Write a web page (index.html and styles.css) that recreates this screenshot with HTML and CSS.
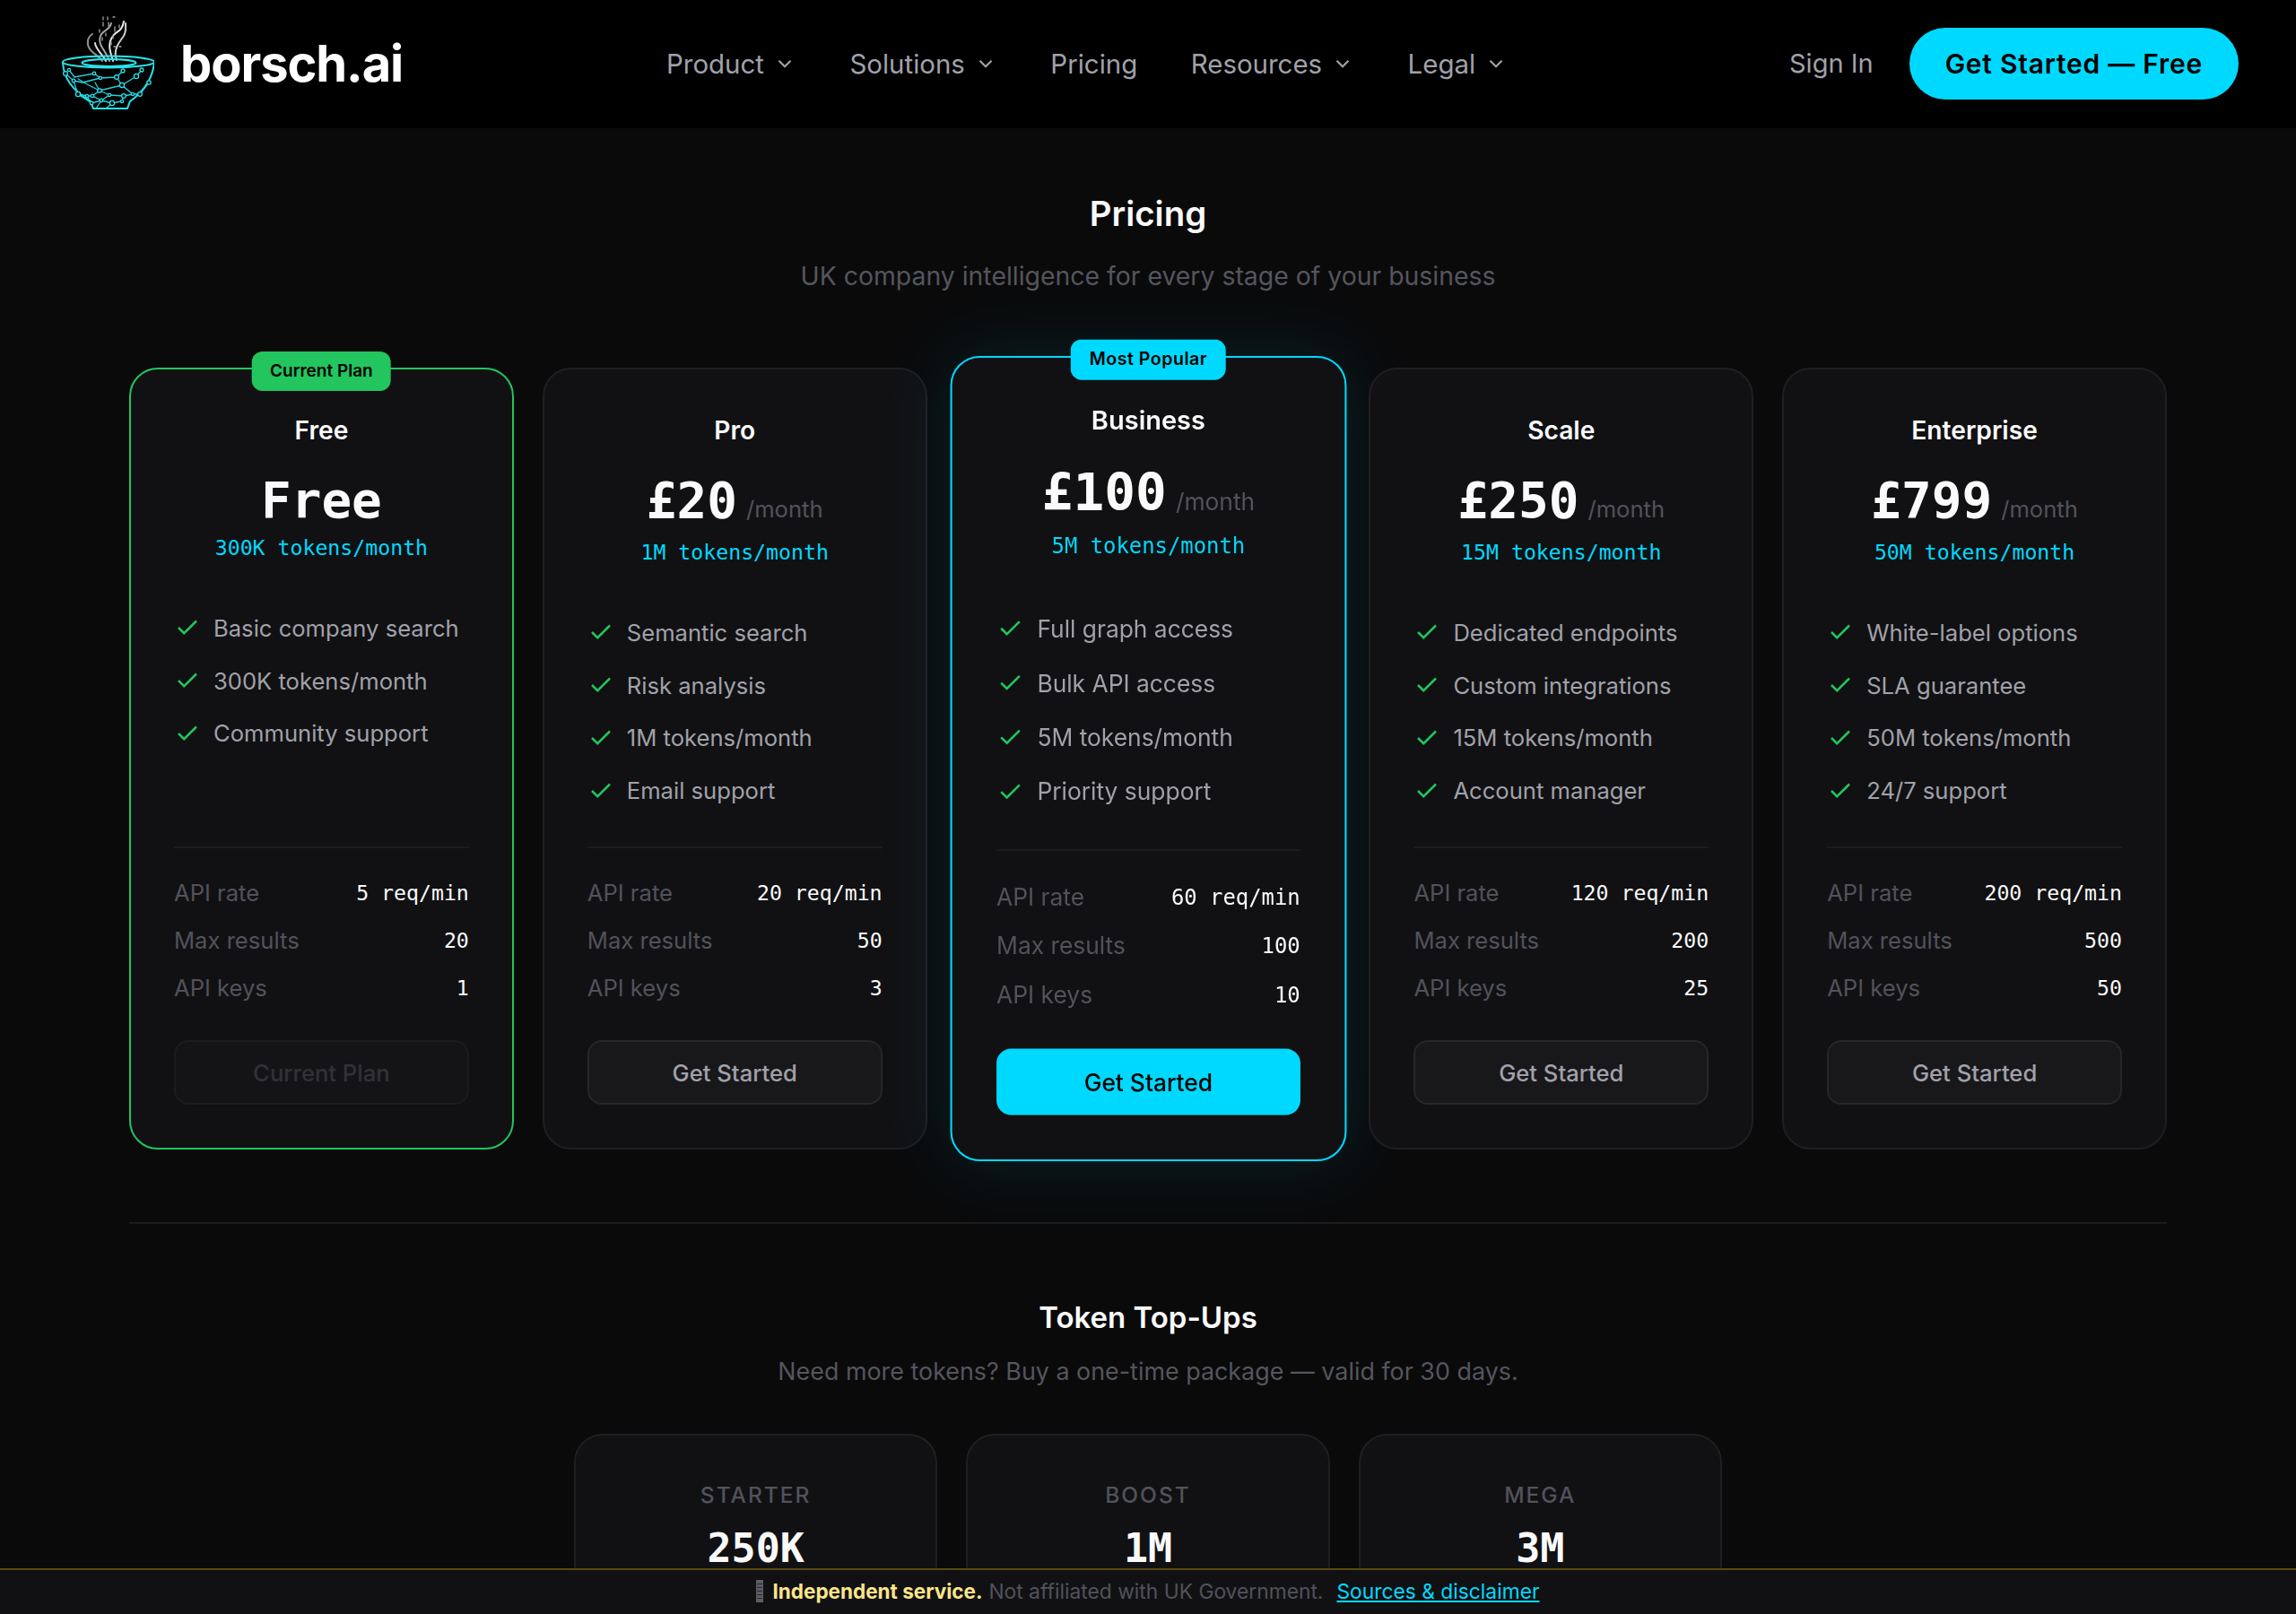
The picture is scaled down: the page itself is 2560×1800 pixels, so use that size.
FILE: index.html
```html
<!DOCTYPE html>
<html lang="en">
<head>
<meta charset="utf-8">
<title>Pricing - borsch.ai</title>
<link rel="stylesheet" href="styles.css">
</head>
<body>
<header class="site-header">
  <a class="brand" href="#">
    <svg class="brand-logo" viewBox="0 0 104 106" aria-hidden="true">
      <g fill="none" stroke-linecap="round">
        <g stroke-width="2">
          <path d="M46 50C40 42 28 38 30 28c0-4 2-6 5-8" stroke="#8f8f8f"/>
          <path d="M54 50C50 38 40 32 44 22c2-6 10-6 12-14" stroke="#a8a8a8"/>
          <path d="M58 50C54 38 52 30 58 22c4-6 10-4 12-16" stroke="#e8e8e8"/>
          <path d="M62 49C58 38 64 30 70 22c3-5 2-10 2-14" stroke="#d0d0d0"/>
          <path d="M50 50C46 42 38 36 38 30" stroke="#e0e0e0"/>
        </g>
        <g stroke="#a0a0a0" stroke-width="1.300">
          <path d="M47 1v3M52 1v3M58 1h2M47 7v4M53 7v4M43 15v3M60 12v5M65 10v3M50 19v3M56 29v3M59 34h2M46 24v3M58 22v3M65 34h2"/>
        </g>
        <g stroke="#2ae4ec" stroke-width="2">
          <ellipse cx="53" cy="51" rx="51" ry="6.500"/>
          <ellipse cx="53.500" cy="52" rx="30" ry="4"/>
          <path d="M2 52c1 18 12 32 31 43l3 8h38l3-8c15-11 25-25 27-43"/>
        </g>
        <g stroke="#22d3dc" stroke-width="1.300">
          <path d="M5 64l9 8 5 15 15 10M9 60l6 8 22-4 7 5 18-1 7-7M14 72l10 2 20-5"/>
          <path d="M62 68l6 9 12 10 8 0 10-13M68 77l16-10 6-7M43 83l25-6M35 89l8-6-5-9"/>
          <path d="M19 87l10 2 6 0 10 5 9-6 16 1 10-2M34 97l11-3 12 3 11-2 2-6M29 89l5 8"/>
          <path d="M54 88l-11-5M19 70l10 6 14 7M57 97l-7 6M45 94l-6 9"/>
        </g>
        <g fill="#000" stroke="#2ae4ec" stroke-width="1.300">
          <circle cx="5" cy="64" r="2.400"/><circle cx="9" cy="60" r="1.600"/><circle cx="14" cy="72" r="1.800"/>
          <circle cx="19" cy="87" r="2.600"/><circle cx="29" cy="89" r="1.600"/><circle cx="37" cy="64" r="1.800"/>
          <circle cx="44" cy="69" r="1.600"/><circle cx="62" cy="68" r="2.400"/><circle cx="69" cy="61" r="2"/>
          <circle cx="84" cy="67" r="2.600"/><circle cx="90" cy="60" r="2"/><circle cx="98" cy="74" r="2.200"/>
          <circle cx="68" cy="77" r="2.600"/><circle cx="43" cy="83" r="2.200"/><circle cx="35" cy="89" r="1.800"/>
          <circle cx="45" cy="94" r="1.800"/><circle cx="54" cy="88" r="1.600"/><circle cx="70" cy="89" r="2.400"/>
          <circle cx="88" cy="87" r="2.400"/><circle cx="57" cy="97" r="2.600"/><circle cx="68" cy="95" r="1.600"/>
          <circle cx="80" cy="87" r="1.600"/><circle cx="34" cy="97" r="1.800"/>
        </g>
      </g>
    </svg>
    <span class="brand-name">borsch.ai</span>
  </a>
  <nav class="main-nav">
    <a href="#">Product<svg class="chev" viewBox="0 0 24 24"><path d="m6 9 6 6 6-6"/></svg></a>
    <a href="#">Solutions<svg class="chev" viewBox="0 0 24 24"><path d="m6 9 6 6 6-6"/></svg></a>
    <a href="#">Pricing</a>
    <a href="#">Resources<svg class="chev" viewBox="0 0 24 24"><path d="m6 9 6 6 6-6"/></svg></a>
    <a href="#">Legal<svg class="chev" viewBox="0 0 24 24"><path d="m6 9 6 6 6-6"/></svg></a>
  </nav>
  <div class="header-actions">
    <a class="sign-in" href="#">Sign In</a>
    <a class="cta" href="#">Get Started — Free</a>
  </div>
</header>

<main class="page">
  <section class="intro">
    <h1>Pricing</h1>
    <p>UK company intelligence for every stage of your business</p>
  </section>

  <section class="plans">
    <article class="plan plan-current">
      <span class="badge badge-green">Current Plan</span>
      <h2>Free</h2>
      <div class="price"><strong>Free</strong></div>
      <div class="tokens">300K tokens/month</div>
      <ul class="features">
        <li><svg class="check" viewBox="0 0 24 24"><path d="M20 6 9 17l-5-5"/></svg>Basic company search</li>
        <li><svg class="check" viewBox="0 0 24 24"><path d="M20 6 9 17l-5-5"/></svg>300K tokens/month</li>
        <li><svg class="check" viewBox="0 0 24 24"><path d="M20 6 9 17l-5-5"/></svg>Community support</li>
      </ul>
      <dl class="stats">
        <div><dt>API rate</dt><dd>5 req/min</dd></div>
        <div><dt>Max results</dt><dd>20</dd></div>
        <div><dt>API keys</dt><dd>1</dd></div>
      </dl>
      <a class="btn btn-disabled">Current Plan</a>
    </article>

    <article class="plan">
      <h2>Pro</h2>
      <div class="price"><strong>£20</strong><span>/month</span></div>
      <div class="tokens">1M tokens/month</div>
      <ul class="features">
        <li><svg class="check" viewBox="0 0 24 24"><path d="M20 6 9 17l-5-5"/></svg>Semantic search</li>
        <li><svg class="check" viewBox="0 0 24 24"><path d="M20 6 9 17l-5-5"/></svg>Risk analysis</li>
        <li><svg class="check" viewBox="0 0 24 24"><path d="M20 6 9 17l-5-5"/></svg>1M tokens/month</li>
        <li><svg class="check" viewBox="0 0 24 24"><path d="M20 6 9 17l-5-5"/></svg>Email support</li>
      </ul>
      <dl class="stats">
        <div><dt>API rate</dt><dd>20 req/min</dd></div>
        <div><dt>Max results</dt><dd>50</dd></div>
        <div><dt>API keys</dt><dd>3</dd></div>
      </dl>
      <a class="btn" href="#">Get Started</a>
    </article>

    <article class="plan plan-popular">
      <span class="badge badge-cyan">Most Popular</span>
      <h2>Business</h2>
      <div class="price"><strong>£100</strong><span>/month</span></div>
      <div class="tokens">5M tokens/month</div>
      <ul class="features">
        <li><svg class="check" viewBox="0 0 24 24"><path d="M20 6 9 17l-5-5"/></svg>Full graph access</li>
        <li><svg class="check" viewBox="0 0 24 24"><path d="M20 6 9 17l-5-5"/></svg>Bulk API access</li>
        <li><svg class="check" viewBox="0 0 24 24"><path d="M20 6 9 17l-5-5"/></svg>5M tokens/month</li>
        <li><svg class="check" viewBox="0 0 24 24"><path d="M20 6 9 17l-5-5"/></svg>Priority support</li>
      </ul>
      <dl class="stats">
        <div><dt>API rate</dt><dd>60 req/min</dd></div>
        <div><dt>Max results</dt><dd>100</dd></div>
        <div><dt>API keys</dt><dd>10</dd></div>
      </dl>
      <a class="btn btn-primary" href="#">Get Started</a>
    </article>

    <article class="plan">
      <h2>Scale</h2>
      <div class="price"><strong>£250</strong><span>/month</span></div>
      <div class="tokens">15M tokens/month</div>
      <ul class="features">
        <li><svg class="check" viewBox="0 0 24 24"><path d="M20 6 9 17l-5-5"/></svg>Dedicated endpoints</li>
        <li><svg class="check" viewBox="0 0 24 24"><path d="M20 6 9 17l-5-5"/></svg>Custom integrations</li>
        <li><svg class="check" viewBox="0 0 24 24"><path d="M20 6 9 17l-5-5"/></svg>15M tokens/month</li>
        <li><svg class="check" viewBox="0 0 24 24"><path d="M20 6 9 17l-5-5"/></svg>Account manager</li>
      </ul>
      <dl class="stats">
        <div><dt>API rate</dt><dd>120 req/min</dd></div>
        <div><dt>Max results</dt><dd>200</dd></div>
        <div><dt>API keys</dt><dd>25</dd></div>
      </dl>
      <a class="btn" href="#">Get Started</a>
    </article>

    <article class="plan">
      <h2>Enterprise</h2>
      <div class="price"><strong>£799</strong><span>/month</span></div>
      <div class="tokens">50M tokens/month</div>
      <ul class="features">
        <li><svg class="check" viewBox="0 0 24 24"><path d="M20 6 9 17l-5-5"/></svg>White-label options</li>
        <li><svg class="check" viewBox="0 0 24 24"><path d="M20 6 9 17l-5-5"/></svg>SLA guarantee</li>
        <li><svg class="check" viewBox="0 0 24 24"><path d="M20 6 9 17l-5-5"/></svg>50M tokens/month</li>
        <li><svg class="check" viewBox="0 0 24 24"><path d="M20 6 9 17l-5-5"/></svg>24/7 support</li>
      </ul>
      <dl class="stats">
        <div><dt>API rate</dt><dd>200 req/min</dd></div>
        <div><dt>Max results</dt><dd>500</dd></div>
        <div><dt>API keys</dt><dd>50</dd></div>
      </dl>
      <a class="btn" href="#">Get Started</a>
    </article>
  </section>

  <section class="topups">
    <h2>Token Top-Ups</h2>
    <p>Need more tokens? Buy a one-time package — valid for 30 days.</p>
    <div class="topup-grid">
      <article class="topup"><div class="topup-label">STARTER</div><div class="topup-value">250K</div></article>
      <article class="topup"><div class="topup-label">BOOST</div><div class="topup-value">1M</div></article>
      <article class="topup"><div class="topup-label">MEGA</div><div class="topup-value">3M</div></article>
    </div>
  </section>
</main>

<footer class="notice">
  <span class="tofu" aria-hidden="true"></span>
  <strong>Independent service.</strong>
  <span class="notice-muted">Not affiliated with UK Government.</span>
  <a href="#">Sources &amp; disclaimer</a>
</footer>
</body>
</html>
```

FILE: styles.css
```css
* { box-sizing: border-box; }
html, body { margin: 0; height: 100%; overflow: hidden; }
body {
  background: #0a0a0b;
  color: #fafafa;
  font-family: Inter, "Liberation Sans", sans-serif;
  text-rendering: optimizeSpeed;
}
a { color: inherit; text-decoration: none; }
h1, h2, p, ul, dl, dd { margin: 0; padding: 0; }

.site-header {
  display: flex;
  align-items: center;
  justify-content: space-between;
  height: 143px;
  padding: 0 64px 2px;
  background: #000;
}
.brand { display: flex; align-items: center; gap: 29px; }
.brand-logo { width: 104px; height: 106px; margin-left: 4px; }
.brand-name { font-size: 56px; font-weight: 700; letter-spacing: -1.100px; color: #fff; }
.main-nav {
  display: flex;
  align-items: center;
  gap: 59.500px;
  margin-right: 20px;
  font-size: 29.440px;
  color: #a1a1aa;
}
.main-nav a { display: flex; align-items: center; gap: 10px; }
.chev { width: 26px; height: 26px; fill: none; stroke: #a1a1aa; stroke-width: 2; }
.header-actions { display: flex; align-items: center; gap: 40px; }
.sign-in { font-size: 29px; color: #a1a1aa; }
.cta {
  display: flex;
  align-items: center;
  height: 80px;
  padding: 0 40px;
  border-radius: 40px;
  background: #00d9ff;
  color: #000;
  font-size: 30px;
  font-weight: 600;
  letter-spacing: .75px;
}

.page { padding: 0 144px; }
.intro { padding-top: 72px; text-align: center; }
.intro h1 { font-size: 38.400px; font-weight: 600; line-height: 46px; }
.intro p { margin-top: 28px; font-size: 28.400px; line-height: 38px; color: #55555e; }

.plans {
  display: grid;
  grid-template-columns: repeat(5, 1fr);
  gap: 32px;
  margin-top: 83px;
}
.plan {
  position: relative;
  display: flex;
  flex-direction: column;
  padding: 48px;
  background: #111113;
  border: 2px solid #1f1f23;
  border-radius: 32px;
}
.plan-current { border-color: #22c55e; }
.plan-popular {
  border-color: #00d9ff;
  transform: scale(1.03);
  box-shadow: 0 0 80px rgba(0, 217, 255, .12);
}
.badge {
  position: absolute;
  top: -20px;
  left: 50%;
  transform: translateX(-50%);
  padding: 0 20px;
  height: 44px;
  line-height: 44px;
  border-radius: 12px;
  font-size: 19px;
  font-weight: 600;
  color: #000;
  white-space: nowrap;
}
.badge-green { background: #22c55e; }
.badge-cyan { background: #00d9ff; letter-spacing: .5px; }
.plan h2 {
  font-size: 28.160px;
  font-weight: 600;
  line-height: 40px;
  text-align: center;
}
.price {
  display: flex;
  justify-content: center;
  align-items: baseline;
  gap: 10px;
  margin-top: 28px;
  line-height: 60px;
}
.price strong {
  font-family: "DejaVu Sans Mono", "Liberation Mono", monospace;
  font-size: 56px;
  font-weight: 700;
}
.price span { font-size: 25.600px; line-height: 50px; color: #52525b; }
.tokens {
  margin-top: 5px;
  text-align: center;
  font-family: "DejaVu Sans Mono", "Liberation Mono", monospace;
  font-size: 23.200px;
  line-height: 36px;
  color: #00d9ff;
}
.features { list-style: none; flex: 1; margin-top: 42px; }
.features li {
  display: flex;
  align-items: center;
  gap: 14px;
  height: 58.800px;
  font-size: 25.600px;
  color: #a1a1aa;
}
.check { flex: none; width: 30px; height: 30px; fill: none; stroke: #22c55e; stroke-width: 2; }
.stats { margin-top: 33px; padding-top: 23px; border-top: 2px solid #1c1c1f; }
.stats div {
  display: flex;
  justify-content: space-between;
  align-items: center;
  height: 53px;
  font-size: 25.600px;
}
.stats dt { color: #52525b; }
.stats dd {
  font-family: "DejaVu Sans Mono", "Liberation Mono", monospace;
  font-size: 23.200px;
  color: #fafafa;
}
.btn {
  display: flex;
  align-items: center;
  justify-content: center;
  height: 72px;
  margin-top: 32px;
  background: #18181b;
  border: 2px solid #27272a;
  border-radius: 16px;
  font-size: 25.600px;
  font-weight: 500;
  color: #a1a1aa;
}
.btn-primary { background: #00d9ff; border-color: #00d9ff; color: #000; }
.btn-disabled { opacity: .5; color: #52525b; }

.topups {
  margin-top: 81px;
  padding-top: 82px;
  border-top: 2px solid #1c1c1f;
  text-align: center;
}
.topups h2 { font-size: 33px; font-weight: 600; line-height: 44px; }
.topups p { margin-top: 19px; font-size: 26.880px; line-height: 38px; color: #55555e; }
.topup-grid {
  display: grid;
  grid-template-columns: repeat(3, 1fr);
  gap: 32px;
  width: 1280px;
  margin: 51px auto 0;
}
.topup {
  height: 400px;
  padding-top: 48px;
  background: #111113;
  border: 2px solid #1f1f23;
  border-radius: 32px;
}
.topup-label { font-size: 24.500px; font-weight: 500; letter-spacing: 2px; line-height: 36px; color: #52525b; }
.topup-value {
  margin-top: 14px;
  font-family: "DejaVu Sans Mono", "Liberation Mono", monospace;
  font-size: 45px;
  font-weight: 700;
  line-height: 56px;
}

.notice {
  position: fixed;
  left: 0;
  right: 0;
  bottom: 0;
  display: flex;
  align-items: center;
  justify-content: center;
  gap: 7px;
  height: 51px;
  padding-bottom: 2px;
  background: #111113;
  border-top: 2px solid #574a14;
  font-size: 22.800px;
  color: #52525b;
}
.tofu {
  width: 8px;
  height: 25px;
  margin-right: 3px;
  border: 1px solid #5c5c64;
  background: repeating-linear-gradient(#5c5c64 0 3px, #2a2a2e 3px 4px);
}
.notice strong { font-size: 22.500px; font-weight: 700; color: #fde68a; }
.notice-muted { margin-right: 8px; }
.notice a { color: #00d9ff; text-decoration: underline; }
```
